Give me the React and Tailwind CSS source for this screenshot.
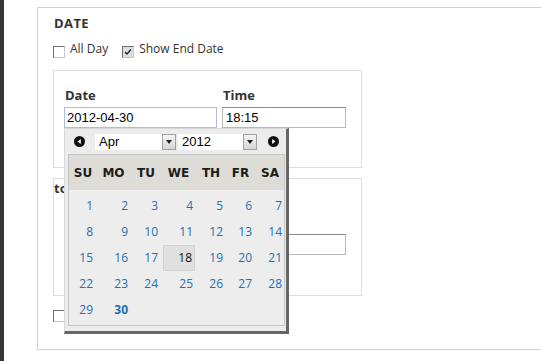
import React from "react";

const WEEKS = [
  [1, 2, 3, 4, 5, 6, 7],
  [8, 9, 10, 11, 12, 13, 14],
  [15, 16, 17, 18, 19, 20, 21],
  [22, 23, 24, 25, 26, 27, 28],
  [29, 30, null, null, null, null, null],
];

const DAYS = ["SU", "MO", "TU", "WE", "TH", "FR", "SA"];

const CheckBox = ({ checked }) => (
  <span
    className={`mt-[5px] flex h-[12px] w-[12px] shrink-0 items-center justify-center border border-[#c8c8c8] border-l-[#6f6f6f] border-t-[#6f6f6f] ${
      checked ? "bg-[#dedede]" : "bg-white"
    }`}
  >
    {checked && (
      <svg width="8" height="8" viewBox="0 0 8 8">
        <path d="M1 4 L3 6 L7 1.5" fill="none" stroke="#222" strokeWidth="1.4" />
      </svg>
    )}
  </span>
);

const NavDot = ({ dir }) => (
  <svg width="11" height="11" viewBox="0 0 11 11" className="shrink-0">
    <circle cx="5.5" cy="5.5" r="5.5" fill="#111" />
    {dir === "prev" ? (
      <path d="M6.8 3 L3.6 5.5 L6.8 8 Z" fill="#fff" />
    ) : (
      <path d="M4.2 3 L7.4 5.5 L4.2 8 Z" fill="#fff" />
    )}
  </svg>
);

const FakeSelect = ({ value, width }) => (
  <div
    className={`flex h-[16px] items-center bg-white font-['Liberation_Sans',Arial,sans-serif] text-[13px] text-black ${width}`}
  >
    <span className="flex-1 pl-[4px] leading-none">{value}</span>
    <span className="flex h-[16px] w-[14px] items-center justify-center border border-[#a0a0a0] bg-gradient-to-b from-[#f4f4f4] to-[#d6d6d6]">
      <svg width="6" height="4" viewBox="0 0 6 4">
        <path d="M0 0 H6 L3 4 Z" fill="#222" />
      </svg>
    </span>
  </div>
);

const DatePicker = () => (
  <div className="absolute left-0 top-[21px] z-10 w-[225px] border-l border-t border-[#d8d8d8] border-b-[3px] border-r-[3px] border-b-[#666] border-r-[#666] bg-[#ececec] pb-[5px] pl-[3px] pr-[1px]">
    <div className="flex h-[25px] items-center">
      <span className="ml-[6px]">
        <NavDot dir="prev" />
      </span>
      <span className="ml-[10px]">
        <FakeSelect value="Apr" width="w-[81px]" />
      </span>
      <span className="ml-[2px]">
        <FakeSelect value="2012" width="w-[79px]" />
      </span>
      <span className="ml-[11px]">
        <NavDot dir="next" />
      </span>
    </div>
    <div className="w-[217px] border border-[#c6c6c6]">
      <div className="grid h-[35px] grid-cols-[26px_35px_30px_35px_30px_29px_30px] bg-[#dddcd6] font-['DejaVu_Sans',Verdana,sans-serif] text-[12px] font-bold text-[#1c1c1c]">
        {DAYS.map((d) => (
          <div key={d} className="flex items-center justify-center pl-[2px]">
            {d}
          </div>
        ))}
      </div>
      <div className="bg-[#ededed] pb-[2px] pt-[3px] font-['Open_Sans',sans-serif] text-[12px] text-[#2470b3]">
        {WEEKS.map((week, i) => (
          <div
            key={i}
            className="grid h-[26px] grid-cols-[26px_35px_30px_35px_30px_29px_30px]"
          >
            {week.map((day, j) =>
              day === 18 ? (
                <div key={j} className="flex justify-end">
                  <div className="flex h-[26px] w-[32px] items-center justify-end border border-[#d2d2d2] bg-[#e0e0e0] pr-[2px] text-[#111]">
                    18
                  </div>
                </div>
              ) : (
                <div
                  key={j}
                  className={`flex items-center justify-end pr-[2px] ${
                    day === 30 ? "font-bold" : ""
                  }`}
                >
                  {day}
                </div>
              )
            )}
          </div>
        ))}
      </div>
    </div>
  </div>
);

// labels of the second row sit under the open picker, so only the spacer is kept
const DateTimeRow = ({ withPicker, dateValue, timeValue, focused, showLabels }) => (
  <>
    <div className="flex h-[16px] gap-[5px] text-[13px] font-bold leading-[16px] text-[#333]">
      {showLabels && (
        <>
          <span className="ml-[1px] w-[152px]">Date</span>
          <span className="ml-[1px]">Time</span>
        </>
      )}
    </div>
    <div className="mt-[4px] flex gap-[5px] font-['Liberation_Sans',Arial,sans-serif] text-[13px] text-black">
      <div className="relative">
        <div
          className={`flex h-[21px] w-[153px] items-center border pl-[2px] ${
            focused ? "border-[#a9c0d8]" : "border-[#b8b8b8] border-t-[#8a8a8a]"
          }`}
        >
          {dateValue}
        </div>
        {withPicker && <DatePicker />}
      </div>
      <div className="flex h-[21px] w-[124px] items-center border border-[#b8b8b8] border-t-[#8a8a8a] pl-[3px]">
        {timeValue}
      </div>
    </div>
  </>
);

export default function App() {
  return (
    <div className="flex h-[361px] w-[541px] overflow-hidden bg-white font-['Open_Sans',sans-serif] text-[#333]">
      <div className="w-[4px] bg-[#353535]" />
      <div className="ml-[33px] mt-[7px] min-w-0 flex-1">
        <div className="h-[343px] border border-r-0 border-[#d2d2d2] pl-[15px]">
          <h3 className="ml-[1px] mt-[7px] h-[16px] text-[13px] font-bold leading-[16px] tracking-[0.4px] text-[#333]">
            DATE
          </h3>

          <div className="mt-[10px] flex h-[16px] items-start text-[12px] leading-[16px]">
            <CheckBox />
            <span className="ml-[5px]">All Day</span>
            <span className="ml-[14px]">
              <CheckBox checked />
            </span>
            <span className="ml-[5px]">Show End Date</span>
          </div>

          <div className="relative z-10 mt-[13px] h-[98px] w-[309px] border border-[#dedede] pl-[10px] pt-[16px]">
            <DateTimeRow withPicker focused showLabels dateValue="2012-04-30" timeValue="18:15" />
          </div>

          <div className="mt-[10px] h-[118px] w-[309px] border border-[#dedede] pl-[10px] pt-[1px]">
            <div className="-ml-[10px] h-[16px] text-[13px] font-bold leading-[16px] text-[#333]">
              to
            </div>
            <div className="mt-[18px]">
              <DateTimeRow dateValue="" timeValue="" />
            </div>
          </div>

          <div className="mt-[9px] flex h-[16px] items-start">
            <CheckBox />
          </div>
        </div>
      </div>
    </div>
  );
}
